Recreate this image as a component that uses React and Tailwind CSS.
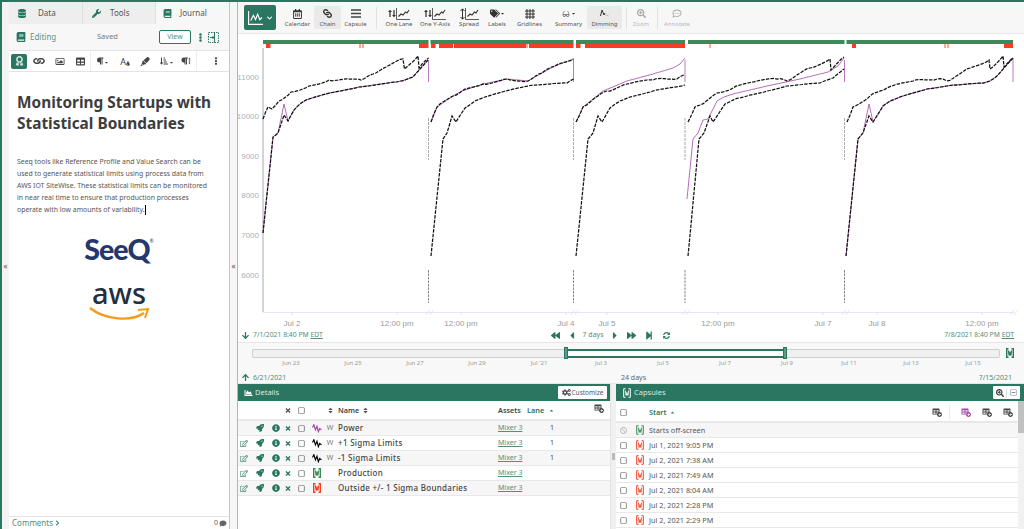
import React from 'react';
import {
  FaDatabase, FaWrench, FaBook, FaEllipsisV, FaLink, FaRegImage, FaTable, FaParagraph, FaTint, FaHighlighter,
  FaCaretDown, FaCaretUp, FaChevronRight, FaChevronDown, FaComment, FaRegCalendarAlt, FaTags, FaGlasses,
  FaSearchPlus, FaRegCommentDots, FaArrowDown, FaArrowUp, FaCaretLeft, FaCaretRight, FaBackward, FaForward,
  FaStepForward, FaSyncAlt, FaChartArea, FaCogs, FaRocket, FaInfoCircle, FaTimes, FaRegEdit, FaRegSquare, FaSort,
  FaRegMinusSquare, FaBan, FaLongArrowAltUp, FaLongArrowAltDown, FaPlusCircle, FaSortAmountDownAlt, FaAward,
} from 'react-icons/fa';

const GREEN = '#2a7660';

function jitter(points, amount) {
  const out = [];
  for (let i = 0; i < points.length - 1; i++) {
    const [x1, y1] = points[i];
    const [x2, y2] = points[i + 1];
    const steps = Math.max(1, Math.round(Math.abs(x2 - x1) / 3));
    for (let s = 0; s < steps; s++) {
      const t = s / steps;
      const w = s === 0 ? 0 : Math.sin(x1 * 7.3 + s * 12.9) * amount;
      out.push([x1 + (x2 - x1) * t, y1 + (y2 - y1) * t + w]);
    }
  }
  out.push(points[points.length - 1]);
  return out.map((p) => p[0].toFixed(1) + ',' + p[1].toFixed(1)).join(' ');
}

const LOW1 = [[263, 233], [273, 137], [278, 133], [284, 115], [288, 121], [294, 110], [300, 104], [306, 100], [326, 94], [359, 87], [396, 82], [405, 80], [413, 77], [420, 69], [428, 60]];
const LOW5 = [[846, 256], [858, 139], [863, 133], [869, 116], [873, 122], [883, 106], [890, 101], [900, 97], [927, 89], [953, 85], [983, 83], [990, 81], [997, 76], [1004, 68], [1013, 58]];

const upper = [
  [[263, 119], [268, 107], [272, 109], [279, 101], [291, 92], [309, 86], [329, 80], [349, 79], [361, 80], [373, 74], [386, 67], [403, 59], [404.5, 69], [418, 56], [419, 68], [428.5, 58]],
  [[431, 122], [437, 107], [453, 96], [462, 91], [483, 84], [507, 79], [528, 81], [542, 73], [555, 66], [573.5, 59]],
  [[576, 122], [583, 107], [598, 96], [607, 91], [627, 84], [653, 80], [667, 79], [677, 79], [685, 75]],
  [[688, 122], [695, 107], [700, 105], [717, 93], [733, 88], [757, 81], [777, 79], [787, 81], [810, 68], [830, 59], [831, 70], [844, 57]],
  [[847, 122], [853, 107], [870, 96], [887, 88], [913, 81], [937, 79], [947, 81], [970, 68], [989, 60], [990, 69], [1003, 56], [1004, 67], [1013, 58]],
];
const lower = [
  LOW1,
  [[431, 256], [443, 139], [447, 133], [452, 116], [456, 122], [465, 108], [475, 101], [485, 97], [510, 90], [533, 85], [567, 83], [573.5, 79]],
  [[576, 256], [588, 139], [593, 133], [598, 116], [602, 122], [610, 108], [620, 101], [630, 97], [653, 91], [685, 85]],
  [[688, 256], [699, 139], [704, 133], [710, 116], [713, 122], [725, 104], [735, 99], [747, 96], [767, 91], [787, 86], [820, 83], [833, 78], [844, 69]],
  LOW5,
];
const power = [
  LOW1.map((p) => (p[0] === 284 ? [284, 104] : p)),
  upper[1],
  [[576, 122], [583, 107], [603, 91], [627, 81], [653, 74], [673, 68], [680, 64], [685, 58]],
  [[687, 199], [693, 139], [698, 133], [703, 120], [708, 119], [717, 101], [724, 97], [733, 94], [767, 86], [800, 79], [828, 72], [838, 66], [844, 58]],
  LOW5.map((p) => (p[0] === 869 ? [869, 104] : p)),
];

const greenBars = [[263, 428.5], [430.5, 573.5], [576, 685], [688, 844.5], [846.5, 1013]];
const redBars = [[266, 270.5], [419, 428.5], [431, 435.5], [439, 453], [454, 526], [529, 573.5], [576, 580.5], [585, 685], [852, 856], [1004, 1013]];
const paleBars = [[359, 361], [362, 364], [526, 528], [709, 711], [944, 946], [947, 949]];
const segEnds = [428.5, 573.5, 685, 844.5];
const xLabels = [[292, 'Jul 2'], [397, '12:00 pm'], [461, '12:00 pm'], [566, 'Jul 4'], [607, 'Jul 5'], [718, '12:00 pm'], [823, 'Jul 7'], [877, 'Jul 8'], [982, '12:00 pm']];
const yLabels = [[77, '11000'], [116, '10000'], [156, '9000'], [195, '8000'], [235, '7000'], [275, '6000']];

function Chart() {
  return (
    <svg className="block shrink-0" width="786" height="294" viewBox="238 34 786 294">
      {greenBars.map(([a, b]) => <rect key={a} x={a} y="40" width={b - a} height="4" fill="#3b8a57" />)}
      {redBars.map(([a, b]) => <rect key={a} x={a} y="44" width={b - a} height="4" fill="#f53f22" />)}
      {paleBars.map(([a, b]) => <rect key={a} x={a} y="44" width={b - a} height="4" fill="#f9a99a" />)}
      <line x1="263" y1="48" x2="263" y2="312" stroke="#a9a9a9" />
      <line x1="263" y1="312.5" x2="1014" y2="312.5" stroke="#e4e7f4" />
      {yLabels.map(([y, t]) => (
        <text key={t} x="259" y={y + 3} textAnchor="end" fontSize="8" fill="#aab1b8" fontFamily="Liberation Sans">{t}</text>
      ))}
      {xLabels.map(([x, t]) => (
        <g key={x}>
          <line x1={x} y1="312" x2={x} y2="315" stroke="#dfe2ef" />
          <text x={x} y="326" textAnchor="middle" fontSize="8" fill="#9a9a9a" fontFamily="Liberation Sans">{t}</text>
        </g>
      ))}
      {[428.5, 573.5, 685, 844.5, 1013].map((x) => (
        <path key={x} d={`M${x - 3} 315 l4 -5 M${x + 1} 315 l4 -5`} stroke="#d5d9ec" strokeWidth="0.7" fill="none" />
      ))}
      {segEnds.map((x) => (
        <g key={x} fill="none">
          <line x1={x} y1="60" x2={x} y2="82" stroke="#a85aa8" strokeWidth="0.8" />
          <line x1={x} y1="118" x2={x} y2="160" stroke="#888" strokeWidth="0.7" strokeDasharray="3 1" />
          <line x1={x} y1="270" x2={x} y2="303" stroke="#666" strokeWidth="0.8" strokeDasharray="2.5 1" />
        </g>
      ))}
      <line x1="1013" y1="58" x2="1013" y2="82" stroke="#a85aa8" strokeWidth="0.8" />
      {power.map((pts, i) => (
        <polyline key={i} points={jitter(pts, 0)} fill="none" stroke="#aa5cab" strokeWidth="0.9" />
      ))}
      {upper.map((pts, i) => (
        <polyline key={i} points={jitter(pts, 1)} fill="none" stroke="#111" strokeWidth="1.25" strokeDasharray="3.5 1.2" />
      ))}
      {lower.map((pts, i) => (
        <polyline key={i} points={jitter(pts, 0.25)} fill="none" stroke="#111" strokeWidth="1.25" strokeDasharray="3.5 1.2" />
      ))}
    </svg>
  );
}

function TrendIcon({ color = '#000', className = 'w-[10px] h-[9px]' }) {
  return (
    <svg viewBox="0 0 11 10" className={className}>
      <path d="M0.5 4 L2 0.8 L3.8 6.5 L5.5 2.5 L7 8.5 L8.5 5 L10.5 6.5" fill="none" stroke={color} strokeWidth="1.3" />
    </svg>
  );
}

function CapsuleIcon({ color = GREEN, bold = false, className = 'w-[8px] h-[10px]' }) {
  return (
    <svg viewBox="0 0 8 10" className={className}>
      <path d="M2.5 0.7 H0.7 V9.3 H2.5 M5.5 0.7 H7.3 V9.3 H5.5" fill="none" stroke={color} strokeWidth={bold ? 1.4 : 1} />
      <path d="M2.4 2.5 L3.1 7.5 L4 4.5 L4.9 7.5 L5.6 2.5" fill="none" stroke={color} strokeWidth={bold ? 1.2 : 0.9} />
    </svg>
  );
}

function ChartMini() {
  return (
    <svg viewBox="0 0 14 12" className="w-[14px] h-[12px]">
      <path d="M0.5 0 V11.5 H14" fill="none" stroke="#333" strokeWidth="0.8" />
      <path d="M2.5 8.5 L5 6 L7 7 L9.5 4 L11 5 L13 2" fill="none" stroke="#333" strokeWidth="1.1" />
    </svg>
  );
}

function AddColumnIcon({ color = '#444' }) {
  return (
    <span className="relative inline-block w-[9px] h-[8px]">
      <FaTable className="w-[8px] h-[7px]" style={{ color }} />
      <FaPlusCircle className="absolute right-[-1px] bottom-[-1px] w-[5px] h-[5px]" style={{ color }} />
    </span>
  );
}

function Tab({ icon, label, active, width, gap }) {
  return (
    <div className={`flex items-center h-full pl-[7px] text-[8px] text-[#555] ${width} ${gap} ${active ? 'bg-[#f7f7f7]' : 'bg-[#eeeeee] border-r border-[#e0e0e0]'}`}>
      {icon}
      <span>{label}</span>
    </div>
  );
}

function ToolButton({ icon, label, width, active, disabled }) {
  return (
    <div className={`flex flex-col items-center justify-center h-[23px] ${width} ${active ? 'bg-[#eaeaea] rounded-[2px]' : ''} ${disabled ? 'opacity-40' : ''}`}>
      <div className="flex items-center justify-center h-[13px] text-[#333]">{icon}</div>
      <span className="text-[6px] leading-[8px] text-[#555] whitespace-nowrap">{label}</span>
    </div>
  );
}

function Sidebar() {
  return (
    <div className="flex flex-col w-[221px] shrink-0 bg-white border-r border-[#c8c8c8]">
      <div className="flex h-[22px]">
        <Tab width="w-[74px]" gap="gap-[12px]" label="Data" icon={<FaDatabase className="ml-[2px] w-[8px] h-[9px] text-[#2a7660]" />} />
        <Tab width="w-[73px]" gap="gap-[9px]" label="Tools" icon={<FaWrench className="ml-[2px] w-[9px] h-[9px] text-[#2a7660]" />} />
        <Tab width="w-[73px]" gap="gap-[8px]" label="Journal" active icon={<FaBook className="w-[9px] h-[9px] text-[#2a7660]" />} />
      </div>
      <div className="flex items-center h-[26px] bg-[#f7f7f7] pl-[7px]">
        <FaBook className="w-[10px] h-[10px] text-[#2a7660]" />
        <span className="ml-[4px] w-[67px] text-[8px] text-[#5f9484]">Editing</span>
        <span className="w-[62px] text-[7.5px] text-[#777]">Saved</span>
        <div className="flex items-center justify-center w-[32px] h-[14px] bg-white border border-[#2a7660] rounded-[2px] text-[7px] text-[#4f8f7c]">View</div>
        <FaEllipsisV className="ml-[7px] w-[5px] h-[9px] text-[#2a7660]" />
        <svg viewBox="0 0 11 11" className="ml-[5px] w-[11px] h-[11px]">
          <rect x="0.5" y="0.5" width="10" height="10" fill="none" stroke="#2a7660" strokeDasharray="1.5 1" />
          <path d="M6.5 0.5 V10.5 M2 5.5 H6 M4.5 4 L6 5.5 L4.5 7" fill="none" stroke="#2a7660" />
        </svg>
      </div>
      <div className="flex items-center h-[22px] border-y border-[#e3e3e3] bg-white pl-[2px] text-[#444]">
        <div className="flex items-center justify-center w-[18px] h-[15px] bg-[#2a7660] rounded-[2px]">
          <FaAward className="w-[9px] h-[10px] text-[#cfe3dc]" />
        </div>
        <div className="flex items-center ml-[1px]">
          <div className="flex justify-center w-[21px]"><FaLink className="w-[10px] h-[10px] rotate-45" /></div>
          <div className="flex justify-center w-[21px]"><FaRegImage className="w-[10px] h-[9px]" /></div>
          <div className="flex justify-center w-[21px]"><FaTable className="w-[11px] h-[9px]" /></div>
        </div>
        <div className="flex items-center h-full ml-[-1px] border-l border-[#eee] pl-[5px]">
          <div className="flex items-end w-[20px]"><FaParagraph className="w-[8px] h-[8px]" /><FaCaretDown className="w-[5px] h-[5px]" /></div>
          <div className="flex justify-center items-end w-[18px]"><span className="text-[9px] leading-[9px]">A</span><FaTint className="w-[4px] h-[5px]" /></div>
          <div className="flex justify-center w-[21px]"><FaHighlighter className="w-[10px] h-[9px]" /></div>
          <div className="flex items-end justify-center w-[22px]"><FaSortAmountDownAlt className="w-[10px] h-[8px]" /><FaCaretDown className="w-[5px] h-[5px]" /></div>
          <div className="flex items-center justify-center w-[18px]"><FaParagraph className="w-[7px] h-[8px]" /><FaEllipsisV className="w-[3px] h-[6px]" /></div>
        </div>
        <div className="flex items-center justify-center h-full border-l border-[#eee] ml-[1px] w-[36px] pl-[6px]"><FaEllipsisV className="w-[4px] h-[8px]" /></div>
      </div>
      <div className="flex-1 flex flex-col pl-[8px]">
        <h1 className="mt-[20px] text-[15.4px] leading-[21px] font-bold text-[#3d3d3d]">
          <span className="block whitespace-nowrap">Monitoring Startups with</span>
          <span className="block whitespace-nowrap">Statistical Boundaries</span>
        </h1>
        <p className="mt-[22px] text-[6.9px] leading-[11.9px] text-[#555]">
          <span className="block whitespace-nowrap">Seeq tools like Reference Profile and Value Search can be</span>
          <span className="block whitespace-nowrap">used to generate statistical limits using process data from</span>
          <span className="block whitespace-nowrap">AWS IOT SiteWise. These statistical limits can be monitored</span>
          <span className="block whitespace-nowrap">in near real time to ensure that production processes</span>
          <span className="flex items-center whitespace-nowrap">operate with low amounts of variability.<span className="inline-block w-px h-[10px] bg-black" /></span>
        </p>
        <div className="flex flex-col items-center mt-[19px] mr-[8px]">
          <div className="flex items-start text-[28.5px] leading-[28px] font-black text-[#24386e] font-['Lato',sans-serif] tracking-[-1px]">
            <span>See<span className="uppercase">q</span></span>
            <span className="text-[5px] leading-[8px] font-normal tracking-normal mt-[2px]">®</span>
          </div>
          <div className="mt-[19px] text-[29px] leading-[22px] font-medium text-[#232f3e]">aws</div>
          <svg viewBox="0 0 60 16" className="w-[60px] h-[16px] mt-[3px]">
            <path d="M1 1 C16 13 42 15 55 6" fill="none" stroke="#f79a1c" strokeWidth="2.4" />
            <path d="M49 3 L59 2 L56 11" fill="none" stroke="#f79a1c" strokeWidth="2" />
          </svg>
        </div>
      </div>
      <div className="flex items-center justify-between h-[13px] border-t border-[#e3e3e3] pl-[3px] pr-[2px]">
        <div className="flex items-center gap-[2px] text-[8px] text-[#4f8f7c]">
          Comments <FaChevronRight className="w-[5px] h-[6px] text-[#2a7660]" />
        </div>
        <div className="flex items-center gap-[1px] text-[7px] text-[#666]">
          0 <FaComment className="w-[8px] h-[7px]" />
        </div>
      </div>
    </div>
  );
}

function Toolbar() {
  return (
    <div className="flex items-center h-[32px] bg-[#f7f7f7] border-b border-[#e6e6e6] pl-[6px] shrink-0">
      <div className="flex items-center justify-center gap-[3px] w-[32px] h-[25px] mr-[5px] bg-[#2a7660] rounded-[2px]">
        <svg viewBox="0 0 14 13" className="w-[15px] h-[14px]">
          <path d="M0.5 0 V12.5 H14 M2.5 9 L5 4 L7 8 L9 3 L11 8 L13 6" fill="none" stroke="#fff" strokeWidth="1.1" />
        </svg>
        <FaChevronDown className="w-[7px] h-[6px] text-white" />
      </div>
      <ToolButton width="w-[33px]" label="Calendar" icon={<FaRegCalendarAlt className="w-[9px] h-[10px]" />} />
      <ToolButton width="w-[27px]" label="Chain" active icon={<FaLink className="w-[9px] h-[9px] rotate-90" />} />
      <ToolButton width="w-[29px]" label="Capsule" icon={
        <svg viewBox="0 0 10 9" className="w-[10px] h-[9px]"><path d="M0 1 H10 M0 4.5 H10 M0 8 H10" stroke="#444" strokeWidth="1.5" /></svg>
      } />
      <div className="w-px h-[22px] bg-[#e2e2e2] ml-[6px] mr-[4px]" />
      <ToolButton width="w-[36px]" label="One Lane" icon={<><FaLongArrowAltUp className="w-[4px] h-[11px]" /><FaLongArrowAltDown className="w-[4px] h-[11px]" /><ChartMini /></>} />
      <ToolButton width="w-[36px]" label="One Y-Axis" icon={<><FaLongArrowAltUp className="w-[4px] h-[11px]" /><FaLongArrowAltDown className="w-[4px] h-[11px]" /><ChartMini /></>} />
      <ToolButton width="w-[32px]" label="Spread" icon={<><svg viewBox="0 0 5 12" className="w-[5px] h-[12px]"><path d="M2.5 1 V11 M0.5 3 L2.5 0.8 L4.5 3 M0.5 9 L2.5 11.2 L4.5 9" fill="none" stroke="#333" /></svg><ChartMini /></>} />
      <ToolButton width="w-[24px]" label="Labels" icon={<><FaTags className="w-[10px] h-[9px]" /><FaCaretDown className="w-[5px] h-[5px]" /></>} />
      <ToolButton width="w-[41px]" label="Gridlines" icon={
        <svg viewBox="0 0 10 10" className="w-[10px] h-[10px]"><path d="M0 2 H10 M0 5 H10 M0 8 H10 M2 0 V10 M5 0 V10 M8 0 V10" stroke="#333" strokeWidth="1" /></svg>
      } />
      <ToolButton width="w-[37px]" label="Summary" icon={<><FaGlasses className="w-[10px] h-[6px] text-[#666]" /><FaCaretDown className="w-[5px] h-[5px]" /></>} />
      <ToolButton width="w-[35px]" label="Dimming" active icon={
        <svg viewBox="0 0 10 9" className="w-[10px] h-[9px]"><path d="M0.5 7 L2 1 L4 6 L5 4" fill="none" stroke="#333" /><path d="M5.5 6 L9 7" stroke="#999" strokeDasharray="1 1" /></svg>
      } />
      <div className="w-px h-[22px] bg-[#e2e2e2] ml-[4px]" />
      <ToolButton width="w-[28px]" disabled label="Zoom" icon={<FaSearchPlus className="w-[9px] h-[9px]" />} />
      <div className="w-px h-[22px] bg-[#e2e2e2] ml-[2px]" />
      <ToolButton width="w-[38px]" disabled label="Annotate" icon={<FaRegCommentDots className="w-[10px] h-[9px]" />} />
    </div>
  );
}

function TimeRow() {
  return (
    <div className="flex items-center h-[15px] bg-white border-b border-[#e6e6e6] text-[6.8px] text-[#4f8f7c] shrink-0">
      <div className="flex items-center w-[310px] pl-[4px]">
        <FaArrowDown className="w-[7px] h-[9px] text-[#2a7660]" />
        <span className="ml-[4px]">7/1/2021 8:40 PM <u>EDT</u></span>
      </div>
      <div className="flex items-center text-[#2a7660]">
        <div className="flex justify-center w-[15px]"><FaBackward className="w-[11px] h-[9px]" /></div>
        <div className="flex justify-center w-[18px]"><FaCaretLeft className="w-[8px] h-[11px]" /></div>
        <div className="flex justify-center w-[24px] text-[7px] text-[#4f8f7c]">7 days</div>
        <div className="flex justify-center w-[20px]"><FaCaretRight className="w-[8px] h-[11px]" /></div>
        <div className="flex justify-center w-[13px]"><FaForward className="w-[11px] h-[9px]" /></div>
        <div className="flex justify-center w-[22px]"><FaStepForward className="w-[8px] h-[9px]" /></div>
        <div className="flex justify-center w-[12px]"><FaSyncAlt className="w-[7px] h-[7px]" /></div>
      </div>
      <div className="flex-1 text-right pr-[10px]">7/8/2021 8:40 PM <u>EDT</u></div>
    </div>
  );
}

const sliderLabels = ['Jun 23', 'Jun 25', 'Jun 27', 'Jun 29', "Jul '21", 'Jul 3', 'Jul 5', 'Jul 7', 'Jul 9', 'Jul 11', 'Jul 13', 'Jul 15'];

function RangeSlider() {
  return (
    <div className="flex flex-col h-[41px] bg-[#f8f8f8] border-b border-[#e6e6e6] shrink-0">
      <div className="flex items-center mt-[4px] ml-[14px] h-[12px]">
        <div className="w-[312px] h-[9px] bg-[#f0f0f0] border border-[#cfcfcf] border-r-0 rounded-l-[2px]" />
        <div className="w-[4px] h-[12px] bg-[#5c9b88] border border-[#2a7660]" />
        <div className="w-[215px] h-[9px] bg-white border-y-2 border-[#2a7660]" />
        <div className="w-[4px] h-[12px] bg-[#5c9b88] border border-[#2a7660]" />
        <div className="w-[213px] h-[9px] bg-[#f0f0f0] border border-[#cfcfcf] border-l-0 rounded-r-[2px]" />
        <div className="ml-[6px]"><CapsuleIcon bold className="w-[8px] h-[10px]" /></div>
      </div>
      <div className="flex ml-[22px] mt-[-1px]">
        {sliderLabels.map((t) => (
          <div key={t} className="w-[62px] text-center text-[6px] leading-[10px] text-[#9a9a9a]">{t}</div>
        ))}
      </div>
      <div className="flex items-center mt-[5px] text-[7px] leading-[9px] text-[#4f8f7c]">
        <div className="flex items-center w-[383px] pl-[4px]">
          <FaArrowUp className="w-[7px] h-[9px] text-[#2a7660]" />
          <span className="ml-[4px]">6/21/2021</span>
        </div>
        <span className="text-[#666]">24 days</span>
        <span className="flex-1 text-right pr-[12px]">7/15/2021</span>
      </div>
    </div>
  );
}

const detailCols = 'grid grid-cols-[11px_22px_10px_14px_12px_19px_8px_4px_160px_29px_28px_1fr] items-center';
const detailRows = [
  { name: 'Power', icon: <TrendIcon color="#a447a4" />, unit: 'W', lane: '1', edit: false },
  { name: '+1 Sigma Limits', icon: <TrendIcon />, unit: 'W', lane: '1', edit: true },
  { name: '-1 Sigma Limits', icon: <TrendIcon />, unit: 'W', lane: '1', edit: true },
  { name: 'Production', icon: <CapsuleIcon bold color="#3b8a57" />, unit: '', lane: '', edit: true },
  { name: 'Outside +/- 1 Sigma Boundaries', icon: <CapsuleIcon bold color="#f53f22" />, unit: '', lane: '', edit: true },
];

function Details() {
  return (
    <div className="flex flex-col w-[373px] shrink-0 bg-white border-r border-[#e3e3e3]">
      <div className="flex items-center h-[17px] bg-[#2a7660] pl-[6px] pr-[3px]">
        <FaChartArea className="w-[9px] h-[8px] text-white" />
        <span className="ml-[2px] flex-1 text-[7.5px] text-[#dce9e5]">Details</span>
        <div className="flex items-center gap-[1px] w-[49px] h-[13px] justify-center bg-white rounded-[1px] text-[6.5px] text-[#555]">
          <FaCogs className="w-[9px] h-[7px] text-[#444]" />Customize
        </div>
      </div>
      <div className={`${detailCols} h-[20px] border-b-2 border-[#e8e8e8] text-[7.3px] font-semibold text-[#444]`}>
        <span /><span /><span />
        <FaTimes className="justify-self-center w-[6px] h-[7px] text-[#555]" />
        <FaRegSquare className="justify-self-center w-[7px] h-[7px] text-[#555]" />
        <span />
        <FaSort className="justify-self-center w-[5px] h-[7px] text-[#555]" />
        <span />
        <span className="flex items-center gap-[4px]">Name <FaSort className="w-[5px] h-[7px] text-[#555]" /></span>
        <span>Assets</span>
        <span className="flex items-center gap-[5px] text-[#2a7660]">Lane <FaCaretUp className="w-[5px] h-[5px]" /></span>
        <span className="flex justify-end pr-[7px] mt-[-5px]"><AddColumnIcon /></span>
      </div>
      {detailRows.map((r, i) => (
        <div key={r.name} className={`${detailCols} h-[15px] border-b border-[#e8e8e8] text-[7px] ${i % 2 === 0 ? 'bg-[#f6f6f6]' : 'bg-white'}`}>
          {r.edit ? <FaRegEdit className="justify-self-center w-[8px] h-[7px] text-[#4f8f7c]" /> : <span />}
          <FaRocket className="justify-self-center w-[8px] h-[8px] text-[#2a7660]" />
          <FaInfoCircle className="justify-self-center w-[8px] h-[8px] text-[#2a7660]" />
          <FaTimes className="justify-self-center w-[6px] h-[7px] text-[#2a7660]" />
          <FaRegSquare className="justify-self-center w-[7px] h-[7px] text-[#555]" />
          <span className="justify-self-center">{r.icon}</span>
          <span className="text-[#777] text-center">{r.unit}</span>
          <span />
          <span className="text-[8px] tracking-[0.3px] font-medium text-[#444] whitespace-nowrap">{r.name}</span>
          <span className="text-[#4f8f7c] underline whitespace-nowrap">Mixer 3</span>
          <span className="text-right text-[#444] pr-[1px]">{r.lane}</span>
          <span />
        </div>
      ))}
    </div>
  );
}

const capsuleRows = ['Jul 1, 2021 9:05 PM', 'Jul 2, 2021 7:38 AM', 'Jul 2, 2021 7:49 AM', 'Jul 2, 2021 8:04 AM', 'Jul 2, 2021 2:28 PM', 'Jul 2, 2021 2:29 PM'];

function Capsules() {
  return (
    <div className="flex flex-col flex-1 min-w-0 bg-white">
      <div className="flex items-center h-[17px] bg-[#2a7660] pl-[7px] pr-[4px]">
        <CapsuleIcon color="#ffffff" className="w-[8px] h-[10px]" />
        <span className="ml-[3px] flex-1 text-[7.5px] text-[#dce9e5]">Capsules</span>
        <div className="flex items-center h-[13px] bg-white rounded-[1px]">
          <div className="flex justify-center w-[14px] border-r border-[#ddd]"><FaSearchPlus className="w-[8px] h-[8px] text-[#333]" /></div>
          <div className="flex justify-center w-[13px]"><FaRegMinusSquare className="w-[7px] h-[7px] text-[#888]" /></div>
        </div>
      </div>
      <div className="flex flex-1 min-h-0">
        <div className="flex-1 min-w-0">
          <div className="flex items-center h-[22px] pt-[2px] border-b-2 border-[#e8e8e8] text-[7.3px]">
            <div className="flex justify-center w-[14px]"><FaRegSquare className="w-[7px] h-[7px] text-[#555]" /></div>
            <span className="w-[19px]" />
            <span className="flex items-center gap-[4px] w-[282px] font-semibold text-[#2a7660]">Start <FaCaretUp className="w-[5px] h-[5px]" /></span>
            <div className="flex justify-center w-[10px]"><AddColumnIcon /></div>
            <div className="w-px h-[14px] bg-[#e8e8e8] ml-[8px] mr-[11px]" />
            <div className="flex gap-[12px]">
              <AddColumnIcon color="#a447a4" />
              <AddColumnIcon />
              <AddColumnIcon />
            </div>
          </div>
          <div className="flex items-center h-[15px] border-b border-[#e8e8e8] bg-[#f6f6f6] text-[7.3px] text-[#555]">
            <div className="flex justify-center w-[14px]"><FaBan className="w-[7px] h-[7px] text-[#bbb]" /></div>
            <div className="flex justify-center w-[19px]"><CapsuleIcon color="#3b8a57" /></div>
            <span>Starts off-screen</span>
          </div>
          {capsuleRows.map((t) => (
            <div key={t} className="flex items-center h-[15px] border-b border-[#e8e8e8] text-[7.3px] text-[#555]">
              <div className="flex justify-center w-[14px]"><FaRegSquare className="w-[7px] h-[7px] text-[#555]" /></div>
              <div className="flex justify-center w-[19px]"><CapsuleIcon color="#f53f22" /></div>
              <span>{t}</span>
            </div>
          ))}
        </div>
        <div className="w-[6px] shrink-0 bg-[#f1f1f1]">
          <div className="h-[32px] bg-[#c1c1c1]" />
        </div>
      </div>
    </div>
  );
}

export default function App() {
  return (
    <div className="flex flex-col w-[1024px] h-[529px] overflow-hidden bg-white font-['Noto_Sans',sans-serif]">
      <div className="h-[2px] bg-[#2a7660] shrink-0" />
      <div className="flex flex-1 min-h-0">
        <div className="flex items-center justify-center w-[9px] shrink-0 bg-[#f3f3f3] border-l-2 border-[#2a7660] text-[8px] text-[#555]">«</div>
        <Sidebar />
        <div className="flex items-center justify-center w-[8px] shrink-0 bg-[#f6f6f6] border-r border-[#b5b5b5] text-[8px] text-[#555]">«</div>
        <div className="flex flex-col flex-1 min-w-0">
          <Toolbar />
          <Chart />
          <TimeRow />
          <RangeSlider />
          <div className="flex flex-1 min-h-0">
            <Details />
            <div className="flex items-center justify-center w-[5px] shrink-0 bg-[#f0f0f0]">
              <div className="w-[3px] h-[7px] bg-[#bbb]" />
            </div>
            <Capsules />
          </div>
        </div>
      </div>
    </div>
  );
}
